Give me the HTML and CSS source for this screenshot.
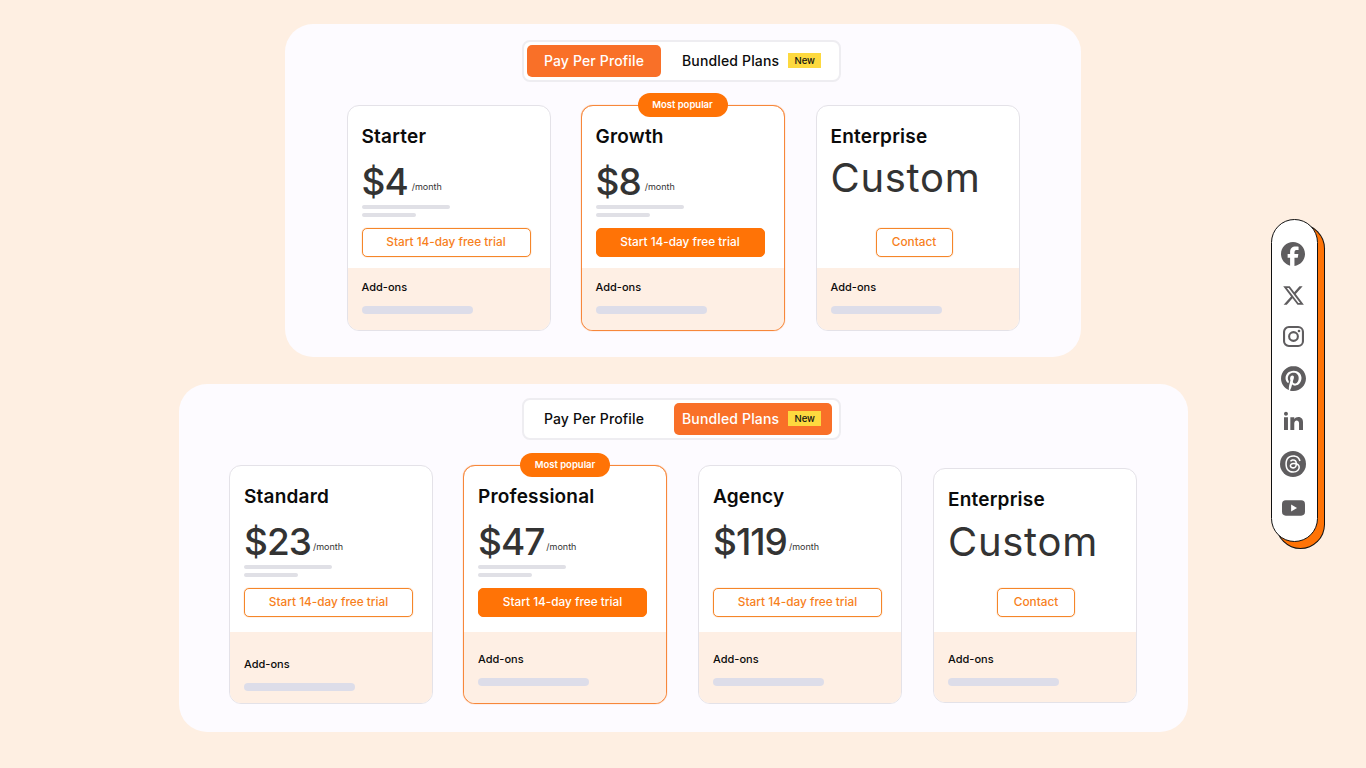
FILE: index.html
```html
<!DOCTYPE html>
<html lang="en">
<head>
  <meta charset="UTF-8">
  <meta name="viewport" content="width=device-width, initial-scale=1">
  <title>Pricing Plans</title>
  <link rel="stylesheet" href="styles.css">
</head>
<body>
  <div class="page">
    <main class="panels">
      <section class="panel panel-small">
        <div class="toggle">
          <div class="tab tab-active">Pay Per Profile</div>
          <div class="tab">Bundled Plans <span class="new">New</span></div>
        </div>
        <div class="cards">
          <div class="card">
            <div class="card-top">
              <h3>Starter</h3>
              <div class="price"><span class="amount">$4</span><span class="per">/month</span></div>
              <div class="line line-long"></div>
              <div class="line line-short"></div>
              <a class="btn">Start 14-day free trial</a>
            </div>
            <div class="addons">
              <p>Add-ons</p>
              <div class="bar"></div>
            </div>
          </div>
          <div class="card card-featured">
            <span class="popular">Most popular</span>
            <div class="card-top">
              <h3>Growth</h3>
              <div class="price"><span class="amount">$8</span><span class="per">/month</span></div>
              <div class="line line-long"></div>
              <div class="line line-short"></div>
              <a class="btn btn-solid">Start 14-day free trial</a>
            </div>
            <div class="addons">
              <p>Add-ons</p>
              <div class="bar"></div>
            </div>
          </div>
          <div class="card">
            <div class="card-top">
              <h3>Enterprise</h3>
              <div class="custom">Custom</div>
              <a class="btn btn-contact">Contact</a>
            </div>
            <div class="addons">
              <p>Add-ons</p>
              <div class="bar"></div>
            </div>
          </div>
        </div>
      </section>

      <section class="panel panel-wide">
        <div class="toggle">
          <div class="tab">Pay Per Profile</div>
          <div class="tab tab-active">Bundled Plans <span class="new">New</span></div>
        </div>
        <div class="cards">
          <div class="card card-low">
            <div class="card-top">
              <h3>Standard</h3>
              <div class="price"><span class="amount">$23</span><span class="per">/month</span></div>
              <div class="line line-long"></div>
              <div class="line line-short"></div>
              <a class="btn">Start 14-day free trial</a>
            </div>
            <div class="addons">
              <p>Add-ons</p>
              <div class="bar"></div>
            </div>
          </div>
          <div class="card card-featured">
            <span class="popular">Most popular</span>
            <div class="card-top">
              <h3>Professional</h3>
              <div class="price"><span class="amount">$47</span><span class="per">/month</span></div>
              <div class="line line-long"></div>
              <div class="line line-short"></div>
              <a class="btn btn-solid">Start 14-day free trial</a>
            </div>
            <div class="addons">
              <p>Add-ons</p>
              <div class="bar"></div>
            </div>
          </div>
          <div class="card">
            <div class="card-top">
              <h3>Agency</h3>
              <div class="price"><span class="amount">$119</span><span class="per">/month</span></div>
              <div class="line-none"></div>
              <a class="btn">Start 14-day free trial</a>
            </div>
            <div class="addons">
              <p>Add-ons</p>
              <div class="bar"></div>
            </div>
          </div>
          <div class="card card-shifted">
            <div class="card-top">
              <h3>Enterprise</h3>
              <div class="custom">Custom</div>
              <a class="btn btn-contact">Contact</a>
            </div>
            <div class="addons">
              <p>Add-ons</p>
              <div class="bar"></div>
            </div>
          </div>
        </div>
      </section>
    </main>

    <aside class="social">
      <svg class="icon icon-fb" viewBox="0 0 24 24"><path d="M9.101 23.691v-7.98H6.627v-3.667h2.474v-1.58c0-4.085 1.848-5.978 5.858-5.978.401 0 .955.042 1.468.103a8.68 8.68 0 0 1 1.141.195v3.325a8.623 8.623 0 0 0-.653-.036 26.805 26.805 0 0 0-.733-.009c-.707 0-1.259.096-1.675.309a1.686 1.686 0 0 0-.679.622c-.258.42-.374.995-.374 1.752v1.297h3.919l-.386 2.103-.287 1.564h-3.246v8.245C19.396 23.238 24 18.179 24 12.044c0-6.627-5.373-12-12-12s-12 5.373-12 12c0 5.628 3.874 10.35 9.101 11.647Z"/></svg>
      <svg class="icon icon-x" viewBox="0 0 24 24"><path d="M18.244 2.25h3.308l-7.227 8.26 8.502 11.24H16.17l-5.214-6.817L4.99 21.75H1.68l7.73-8.835L1.254 2.25H8.08l4.713 6.231zm-1.161 17.52h1.833L7.084 4.126H5.117z"/></svg>
      <svg class="icon icon-ig" viewBox="0 0 24 24"><rect x="1.2" y="1.2" width="21.6" height="21.6" rx="5.5" fill="none" stroke="#5f5d5f" stroke-width="2.4"/><circle cx="12" cy="12" r="5" fill="none" stroke="#5f5d5f" stroke-width="2.4"/><circle cx="18.3" cy="5.7" r="1.5"/></svg>
      <svg class="icon icon-pin" viewBox="0 0 24 24"><path d="M12.017 0C5.396 0 .029 5.367.029 11.987c0 5.079 3.158 9.417 7.618 11.162-.105-.949-.199-2.403.041-3.439.219-.937 1.406-5.957 1.406-5.957s-.359-.72-.359-1.781c0-1.663.967-2.911 2.168-2.911 1.024 0 1.518.769 1.518 1.688 0 1.029-.653 2.567-.992 3.992-.285 1.193.6 2.165 1.775 2.165 2.128 0 3.768-2.245 3.768-5.487 0-2.861-2.063-4.869-5.008-4.869-3.41 0-5.409 2.562-5.409 5.199 0 1.033.394 2.143.889 2.741.099.12.112.225.085.345-.09.375-.293 1.199-.334 1.363-.053.225-.172.271-.401.165-1.495-.69-2.433-2.878-2.433-4.646 0-3.776 2.748-7.252 7.92-7.252 4.158 0 7.392 2.967 7.392 6.923 0 4.135-2.607 7.462-6.233 7.462-1.214 0-2.354-.629-2.758-1.379l-.749 2.848c-.269 1.045-1.004 2.352-1.498 3.146 1.123.345 2.306.535 3.55.535 6.607 0 11.985-5.365 11.985-11.987C23.97 5.39 18.592.026 11.985.026L12.017 0z"/></svg>
      <svg class="icon icon-in" viewBox="0 0 24 24"><path d="M4.98 3.5C4.98 4.88 3.87 6 2.5 6S.02 4.88.02 3.5 1.13 1 2.5 1s2.48 1.12 2.48 2.5zM5 8H0v16h5V8zm7.98 0H8.01v16h4.97v-8.4c0-4.68 6.02-5.06 6.02 0V24H24V13.87c0-7.88-8.92-7.59-11.02-3.71V8z"/></svg>
      <svg class="icon icon-th" viewBox="0 0 32 32"><circle cx="16" cy="16" r="16"/><path fill="#fff" transform="translate(5.2 5.2) scale(.9)" d="M12.186 24h-.007c-3.581-.024-6.334-1.205-8.184-3.509C2.35 18.44 1.5 15.586 1.472 12.01v-.017c.03-3.579.879-6.43 2.525-8.482C5.845 1.205 8.6.024 12.18 0h.014c2.746.02 5.043.725 6.826 2.098 1.677 1.29 2.858 3.13 3.509 5.467l-2.04.569c-1.104-3.96-3.898-5.984-8.304-6.015-2.91.022-5.11.936-6.54 2.717C4.307 6.504 3.616 8.914 3.589 12c.027 3.086.718 5.496 2.057 7.164 1.43 1.783 3.631 2.698 6.54 2.717 2.623-.02 4.358-.631 5.8-2.045 1.647-1.613 1.618-3.593 1.09-4.798-.31-.71-.873-1.3-1.634-1.75-.192 1.352-.622 2.446-1.284 3.272-.886 1.102-2.14 1.704-3.73 1.79-1.202.065-2.361-.218-3.259-.801-1.063-.689-1.685-1.74-1.752-2.964-.065-1.19.408-2.285 1.33-3.082.88-.76 2.119-1.207 3.583-1.291a13.853 13.853 0 0 1 3.02.142c-.126-.742-.375-1.332-.75-1.757-.513-.586-1.308-.883-2.359-.89h-.029c-.844 0-1.992.232-2.721 1.32L7.734 7.847c.98-1.454 2.568-2.256 4.478-2.256h.044c3.194.02 5.097 1.975 5.287 5.388.108.046.216.094.321.142 1.49.7 2.58 1.761 3.154 3.07.797 1.82.871 4.79-1.548 7.158-1.85 1.81-4.094 2.628-7.277 2.65Zm1.003-11.69c-.242 0-.487.007-.739.021-1.836.103-2.98.946-2.916 2.143.067 1.256 1.452 1.839 2.784 1.767 1.224-.065 2.818-.543 3.086-3.71a10.5 10.5 0 0 0-2.215-.221z"/></svg>
      <svg class="icon icon-yt" viewBox="0 0 24 16"><rect width="24" height="16" rx="4"/><path fill="#fff" d="M9.5 4.4v7.2l6.2-3.6z"/></svg>
    </aside>
  </div>
</body>
</html>
```

FILE: styles.css
```css
* {
  box-sizing: border-box;
}

body {
  margin: 0;
  background-color: #feefe2;
  font-family: "Inter", "Liberation Sans", sans-serif;
  color: #333;
}

.page {
  display: grid;
  grid-template-columns: 1fr 1009px 1fr;
  min-height: 768px;
}

.panels {
  grid-column: 2;
  display: flex;
  flex-direction: column;
  align-items: center;
  gap: 27px;
  padding-top: 24px;
}

.panel {
  display: flex;
  flex-direction: column;
  align-items: center;
  background-color: #fdfbff;
  border-radius: 28px;
  padding-top: 16px;
}

.panel-small {
  width: 796px;
  height: 333px;
}

.panel-wide {
  width: 1009px;
  height: 348px;
  padding-top: 14px;
}

/* toggle */

.toggle {
  display: flex;
  gap: 13px;
  width: 319px;
  height: 42px;
  padding: 3px;
  margin-left: -3px;
  background-color: #fff;
  border: 2px solid #eeedf1;
  border-radius: 8px;
}

.tab {
  display: flex;
  align-items: center;
  justify-content: center;
  gap: 9px;
  width: 134px;
  padding-bottom: 2px;
  font-size: 14px;
  font-weight: 500;
  letter-spacing: 0.15px;
  color: #0c0c0c;
  border-radius: 5px;
  white-space: nowrap;
}

.tab + .tab {
  justify-content: flex-start;
  width: 158px;
  padding-left: 8px;
}

.tab-active {
  background-color: #f97028;
  color: #fff;
}

.new {
  padding: 2px 0;
  width: 33px;
  height: 15px;
  line-height: 11px;
  text-align: center;
  letter-spacing: 0;
  font-size: 9.5px;
  font-weight: 500;
  color: #111;
  background-color: #fdd93f;
}

/* cards */

.cards {
  display: flex;
  gap: 30px;
  margin-top: 23px;
}

.panel-wide .cards {
  margin-top: 25px;
}

.card {
  position: relative;
  display: flex;
  flex-direction: column;
  width: 204px;
  height: 226px;
  background-color: #fff;
  border: 1px solid #e4e2e8;
  border-radius: 12px;
}

.panel-wide .card {
  height: 239px;
}

.card-featured {
  border-color: #f7873a;
  box-shadow: 0 0 1px #f7873a;
}

.card-featured + .card,
.card-shifted {
  margin-left: 1px;
}

.panel-wide .card-shifted {
  height: 235px;
  margin-top: 3px;
}

.popular {
  position: absolute;
  top: -13px;
  left: 56px;
  width: 90px;
  height: 24px;
  line-height: 24px;
  text-align: center;
  font-size: 9.5px;
  font-weight: 600;
  color: #fff;
  background-color: #ff7306;
  border-radius: 12px;
}

.card-top {
  height: 162px;
  padding: 19px 14px 0;
}

.panel-wide .card-top {
  height: 166px;
}

.panel-wide .card-shifted .card-top {
  height: 163px;
}

h3 {
  margin: 0;
  height: 24px;
  line-height: 24px;
  font-size: 19px;
  font-weight: 600;
  letter-spacing: 0.2px;
  color: #0b0b0b;
}

.price {
  display: flex;
  align-items: center;
  gap: 4px;
  height: 42px;
  margin-top: 12px;
  line-height: 42px;
}

.amount {
  font-size: 37px;
  font-weight: 500;
  letter-spacing: -1px;
  color: #333;
}

.per {
  margin-top: 10px;
  font-size: 9px;
  color: #333;
}

.panel-wide .per {
  margin-left: -2px;
}

.line {
  height: 4px;
  margin-top: 4px;
  background-color: #e0e0e6;
  border-radius: 2px;
}

.line-long {
  width: 88px;
  margin-top: 2px;
}

.line-short {
  width: 54px;
}

.line-none {
  height: 14px;
}

.btn {
  display: block;
  width: 169px;
  height: 29px;
  margin-top: 11px;
  line-height: 27px;
  text-align: center;
  font-size: 11.8px;
  font-weight: 500;
  color: #f77f1c;
  border: 1px solid #f5862a;
  border-radius: 5px;
  box-shadow: 0 0 1px #f5862a;
}

.btn-solid {
  background-color: #ff7306;
  border-color: #ff7306;
  color: #fff;
  box-shadow: none;
}

.custom {
  margin-top: 5px;
  height: 48px;
  line-height: 48px;
  font-size: 40px;
  font-weight: 400;
  letter-spacing: 0.7px;
  color: #333;
}

.btn-contact {
  width: 77px;
  margin: 26px 0 0 45px;
}

.panel-wide .btn-contact {
  width: 78px;
  margin: 23px 0 0 49px;
}

.panel-wide .card-shifted .custom {
  margin-top: 6px;
}

.panel-wide .card-shifted .btn-contact {
  margin-top: 22px;
}

.addons {
  flex: 1;
  padding: 12px 14px 0;
  background-color: #feefe4;
  border-radius: 0 0 11px 11px;
}

.panel-wide .addons {
  padding-top: 20px;
}

.panel-wide .card-low .addons {
  padding-top: 25px;
}

.addons p {
  margin: 0;
  height: 14px;
  line-height: 14px;
  font-size: 11px;
  font-weight: 500;
  color: #0b0b0b;
}

.bar {
  width: 111px;
  height: 8px;
  margin-top: 12px;
  background-color: #dddde9;
  border-radius: 4px;
}

/* social strip */

.social {
  grid-column: 3;
  justify-self: end;
  align-self: start;
  display: flex;
  flex-direction: column;
  align-items: center;
  width: 47px;
  height: 323px;
  margin: 219px 48px 0 0;
  padding: 22px 3px 0 0;
  background-color: #fff;
  border: 1px solid #111;
  border-radius: 24px;
  box-shadow: 6px 6px 0 0 #ff7306, 6px 6px 0 1px #111;
}

.icon {
  display: block;
  fill: #5f5d5f;
  flex: none;
}

.icon-fb { width: 24px; height: 24px; }
.icon-x { width: 23px; height: 23px; margin-top: 18px; }
.icon-ig { width: 21px; height: 21px; margin-top: 19px; }
.icon-pin { width: 25px; height: 25px; margin-top: 19px; }
.icon-in { width: 19px; height: 19px; margin-top: 20px; }
.icon-th { width: 26px; height: 26px; margin-top: 21px; }
.icon-yt { width: 23px; height: 16px; margin-top: 23px; }
```
